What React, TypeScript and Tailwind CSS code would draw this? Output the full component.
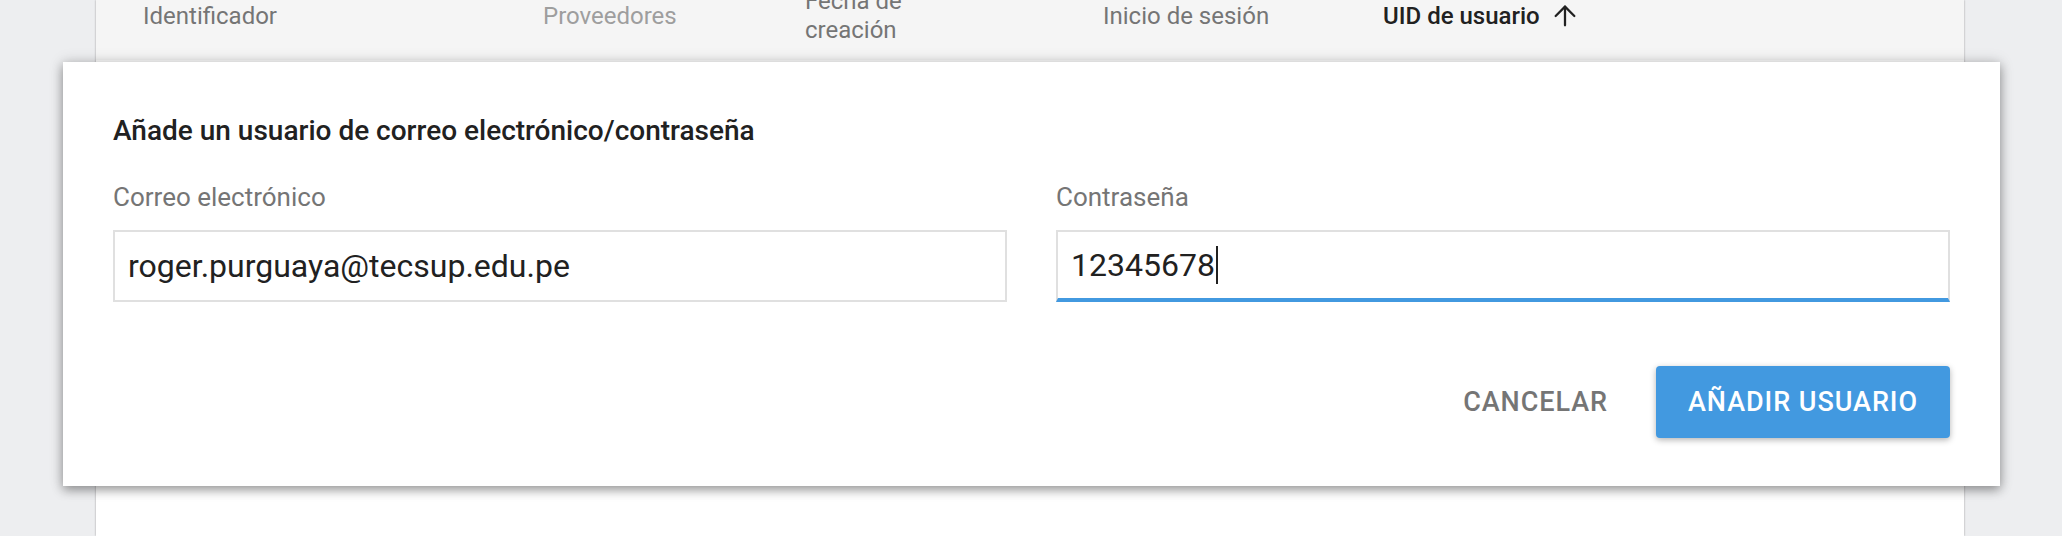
import { ArrowUp } from 'lucide-react'

const columns = [
  { label: 'Identificador', width: 'w-[400px]', color: 'text-[#757575]' },
  { label: 'Proveedores', width: 'w-[262px]', color: 'text-[#9e9e9e]' },
  { label: 'Fecha de creación', width: 'w-[298px]', color: 'text-[#757575]', wrap: true },
  { label: 'Inicio de sesión', width: 'w-[280px]', color: 'text-[#757575]' },
]

function TableHeader() {
  return (
    <div className="h-[60px] overflow-hidden bg-[#f5f5f5]">
      <div className="-mt-[28px] flex h-[88px] items-center pl-[47px] text-[24px] leading-[29px]">
        {columns.map((col) => (
          <div key={col.label} className={`${col.width} shrink-0 ${col.color}`}>
            {col.wrap ? <span className="block w-[150px]">{col.label}</span> : col.label}
          </div>
        ))}
        <div className="flex items-center gap-[9px] text-[#212121]">
          <span className="font-medium">UID de usuario</span>
          <ArrowUp className="size-[32px]" strokeWidth={1.7} />
        </div>
      </div>
    </div>
  )
}

function Field({ label, value, focused }: { label: string; value: string; focused?: boolean }) {
  return (
    <div>
      <p className="text-[26px] leading-[30px] text-[#757575]">{label}</p>
      <div
        className={`mt-[18px] flex h-[72px] items-center border-2 border-[#e0e0e0] pl-[13px] text-[32px] text-[#212121] ${
          focused ? 'border-b-4 border-b-[#4299e0]' : ''
        }`}
      >
        <span>{value}</span>
        {focused ? <span className="ml-[1px] h-[38px] w-[2px] bg-[#212121]" /> : null}
      </div>
    </div>
  )
}

function AddUserDialog() {
  return (
    <div className="absolute left-[63px] top-[62px] w-[1937px] bg-white px-[50px] pb-[48px] pt-[53px] shadow-[0_4px_10px_rgba(0,0,0,0.35),0_0_14px_rgba(0,0,0,0.15)]">
      <h2 className="text-[28px] font-medium leading-[32px] text-[#212121]">
        Añade un usuario de correo electrónico/contraseña
      </h2>
      <div className="mt-[35px] grid grid-cols-2 gap-x-[49px]">
        <Field label="Correo electrónico" value="roger.purguaya@tecsup.edu.pe" />
        <Field label="Contraseña" value="12345678" focused />
      </div>
      <div className="mt-[64px] flex items-center justify-end gap-[32px]">
        <button type="button" className="px-4 text-[27px] font-medium tracking-[0.035em] text-[#757575]">
          CANCELAR
        </button>
        <button
          type="button"
          className="flex h-[72px] w-[294px] items-center justify-center rounded-[4px] bg-[#4299e0] text-[27px] font-medium tracking-[0.035em] text-white shadow-[0_2px_6px_rgba(0,0,0,0.3)]"
        >
          AÑADIR USUARIO
        </button>
      </div>
    </div>
  )
}

export default function App() {
  return (
    <div className="relative h-[536px] w-[2062px] overflow-hidden bg-[#edeef0] font-['Roboto',sans-serif]">
      <div className="ml-[96px] h-full w-[1868px] bg-white shadow-[0_0_2px_rgba(0,0,0,0.35)]">
        <TableHeader />
      </div>
      <AddUserDialog />
    </div>
  )
}
